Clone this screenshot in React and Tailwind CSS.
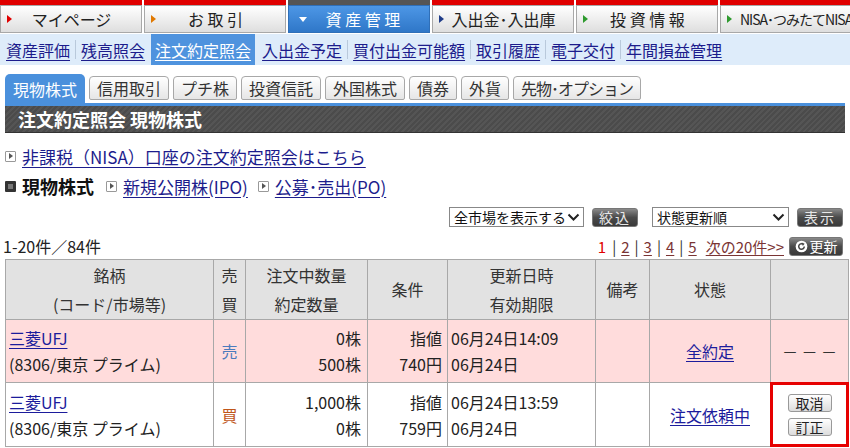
import React from 'react';

const topTabs = [
  { label: 'マイページ', arrow: 'border-l-[#e00000]' },
  { label: 'お 取 引', arrow: 'border-l-[#e07800]' },
  { label: '資 産 管 理', active: true },
  { label: '入出金･入出庫', arrow: 'border-l-[#1f3c88]' },
  { label: '投 資 情 報', arrow: 'border-l-[#2e9a2e]' },
  { label: 'NISA･つみたてNISA', arrow: 'border-l-[#2e9a2e]', small: true },
];

const subLinks = ['資産評価', '残高照会', '注文約定照会', '入出金予定', '買付出金可能額', '取引履歴', '電子交付', '年間損益管理'];

const tabs = ['現物株式', '信用取引', 'プチ株', '投資信託', '外国株式', '債券', '外貨', '先物･オプション'];

const LinkIcon = () => (
  <span className="inline-flex items-center justify-center w-[11px] h-[11px] border border-[#999] bg-white rounded-[1px] mr-[6px] shrink-0">
    <span className="w-0 h-0 border-y-[3px] border-y-transparent border-l-[4px] border-l-[#555] ml-[1px]" />
  </span>
);

const Select = ({ label, width }) => (
  <div className={`flex items-center justify-between h-[20px] border border-[#888] bg-white pl-[4px] pr-[3px] text-[14px] text-[#111] whitespace-nowrap ${width}`}>
    <span className="leading-none">{label}</span>
    <svg width="13" height="9" viewBox="0 0 13 9" className="shrink-0">
      <path d="M1.5 1.5 L6.5 6.5 L11.5 1.5" fill="none" stroke="#222" strokeWidth="2" />
    </svg>
  </div>
);

const DarkButton = ({ children, width }) => (
  <div className={`flex items-center justify-center h-[19px] rounded-[3px] border border-[#777] bg-linear-to-b from-[#8a8a8a] via-[#4a4a4a] to-[#3a3a3a] text-[#e8e8e8] text-[14px] leading-none tracking-[2px] ${width}`}>
    {children}
  </div>
);

const SmallButton = ({ children }) => (
  <div className="flex items-center justify-center w-[44px] h-[18px] rounded-[3px] border border-[#999] bg-linear-to-b from-white to-[#dcdcdc] text-[14px] leading-none text-[#222]">
    {children}
  </div>
);

const App = () => {
  return (
    <div className="w-[850px] h-[448px] overflow-hidden bg-white font-['Noto_Sans_CJK_JP',sans-serif] text-[#222]">
      {/* top navigation */}
      <div className="flex gap-[2px] overflow-hidden w-[850px]">
        {topTabs.map((t, i) => (
          <div key={i} className="flex flex-col w-[142px] shrink-0">
            <div className={`h-[5px] ${t.active ? 'bg-[#555]' : 'bg-[#e00000]'}`} />
            <div
              className={`h-[28px] flex items-center pl-[6px] border ${
                t.active
                  ? 'bg-linear-to-b from-[#4d97e6] to-[#2f77c8] border-[#2f6fb8] text-white'
                  : 'bg-linear-to-b from-white to-[#dedede] border-[#a8a8a8] text-[#222]'
              }`}
            >
              {t.active ? (
                <span className="w-0 h-0 border-x-[4px] border-x-transparent border-t-[5px] border-t-white ml-[4px]" />
              ) : (
                <span className={`w-0 h-0 border-y-[4px] border-y-transparent border-l-[5px] ${t.arrow}`} />
              )}
              <span
                className={`${t.small ? 'ml-[8px] text-[14px] tracking-[-1px] whitespace-nowrap' : 'flex-1 text-center text-[16px] pr-[10px] whitespace-nowrap'} leading-none`}
              >
                {t.label}
              </span>
            </div>
          </div>
        ))}
      </div>

      {/* sub navigation */}
      <div className="flex items-stretch h-[31px] mt-[1px] bg-[#deecfa] pl-[2px]">
        {subLinks.map((s, i) => (
          <React.Fragment key={s}>
            {i > 0 && i !== 2 && i !== 3 && <div className="w-px bg-[#b9c9db] my-[6px] mx-[1px]" />}
            {i === 3 && <div className="w-[3px]" />}
            <div
              className={`flex items-center px-[4px] text-[16px] underline underline-offset-[3px] leading-none ${
                i === 2 ? 'bg-[#4f93de] text-white ml-[2px]' : 'text-[#1c1c8c]'
              }`}
            >
              {s}
            </div>
          </React.Fragment>
        ))}
      </div>

      {/* product tabs */}
      <div className="px-[5px] mt-[9px]">
        <div className="flex items-end gap-[4px]">
          {tabs.map((t, i) =>
            i === 0 ? (
              <div key={t} className="h-[29px] flex items-center px-[8px] rounded-t-[5px] bg-[#4a90dc] text-white text-[16px] leading-none">
                {t}
              </div>
            ) : (
              <div
                key={t}
                className="h-[24px] mb-[3px] flex items-center px-[7px] rounded-t-[4px] rounded-b-[2px] border border-[#a8a8a8] bg-linear-to-b from-white to-[#e6e6e6] text-[16px] text-[#333] leading-none"
              >
                {i === 7 ? <span className="tracking-[-1px]">{t}</span> : t}
              </div>
            )
          )}
        </div>
        <div className="h-[3px] bg-[#4a90dc]" />
        <div className="h-[27px] flex items-center pl-[13px] bg-[repeating-linear-gradient(135deg,#4b4b4b_0px,#4b4b4b_2px,#555555_2px,#555555_4px)] border-b border-[#333]">
          <span className="text-white text-[18px] font-bold leading-none">注文約定照会 現物株式</span>
        </div>
      </div>

      {/* links */}
      <div className="mt-[12px] pl-[5px] h-[22px] flex items-center">
        <LinkIcon />
        <span className="text-[17px] text-[#1c1c8c] underline underline-offset-[3px] leading-none">非課税（NISA）口座の注文約定照会はこちら</span>
      </div>
      <div className="mt-[8px] pl-[5px] h-[22px] flex items-center">
        <span className="inline-flex items-center justify-center w-[11px] h-[11px] bg-[#333] rounded-[1px] mr-[6px]">
          <span className="w-[5px] h-[5px] bg-[#777]" />
        </span>
        <span className="text-[18px] font-bold leading-none text-[#111] mr-[12px]">現物株式</span>
        <LinkIcon />
        <span className="text-[17px] text-[#1c1c8c] underline underline-offset-[3px] leading-none mr-[10px]">新規公開株(IPO)</span>
        <LinkIcon />
        <span className="text-[17px] text-[#1c1c8c] underline underline-offset-[3px] leading-none">公募･売出(PO)</span>
      </div>

      {/* controls */}
      <div className="mt-[10px] flex items-center justify-end pr-[7px] gap-[8px]">
        <Select label="全市場を表示する" width="w-[135px]" />
        <DarkButton width="w-[46px] mr-[6px]">絞込</DarkButton>
        <Select label="状態更新順" width="w-[137px]" />
        <DarkButton width="w-[46px]">表示</DarkButton>
      </div>

      {/* count + pagination */}
      <div className="mt-[9px] flex items-center justify-between pl-[3px] pr-[7px] h-[20px]">
        <span className="text-[16px] leading-none">1-20件／84件</span>
        <div className="flex items-center text-[15px] leading-none">
          <span className="text-[#e00000] mr-[6px]">1</span>
          {['2', '3', '4', '5'].map((n) => (
            <React.Fragment key={n}>
              <span className="text-[#333] mr-[5px]">|</span>
              <span className="text-[#7a3434] underline underline-offset-[2px] mr-[5px]">{n}</span>
            </React.Fragment>
          ))}
          <span className="text-[#7a3434] underline underline-offset-[2px] ml-[4px] mr-[5px]">次の20件&gt;&gt;</span>
          <div className="flex items-center justify-center w-[54px] h-[19px] rounded-[3px] border border-[#777] bg-linear-to-b from-[#8a8a8a] via-[#4a4a4a] to-[#3a3a3a] text-white text-[14px] gap-[2px]">
            <svg width="13" height="13" viewBox="0 0 14 14">
              <circle cx="7" cy="7" r="6.3" fill="#fff" />
              <path d="M10 7 A3 3 0 1 1 8.5 4.4" fill="none" stroke="#444" strokeWidth="1.6" />
              <path d="M7.2 2.8 L10.4 4 L8.4 6.4 Z" fill="#444" />
            </svg>
            <span>更新</span>
          </div>
        </div>
      </div>

      {/* table */}
      <table className="mt-[3px] ml-[5px] w-[843px] table-fixed border-collapse text-[16px] leading-[26px]">
        <colgroup>
          <col className="w-[208px]" />
          <col className="w-[32px]" />
          <col className="w-[122px]" />
          <col className="w-[80px]" />
          <col className="w-[148px]" />
          <col className="w-[54px]" />
          <col className="w-[121px]" />
          <col className="w-[78px]" />
        </colgroup>
        <thead>
          <tr className="h-[60px] bg-[#e2e2e2] text-[#333] leading-[29px]">
            <th className="font-normal border border-[#a8a8a8] text-center">銘柄<br />(コード/市場等)</th>
            <th className="font-normal border border-[#a8a8a8] text-center">売<br />買</th>
            <th className="font-normal border border-[#a8a8a8] text-center">注文中数量<br />約定数量</th>
            <th className="font-normal border border-[#a8a8a8] text-center">条件</th>
            <th className="font-normal border border-[#a8a8a8] text-center">更新日時<br />有効期限</th>
            <th className="font-normal border border-[#a8a8a8] text-center">備考</th>
            <th className="font-normal border border-[#a8a8a8] text-center">状態</th>
            <th className="font-normal border border-[#a8a8a8]"></th>
          </tr>
        </thead>
        <tbody>
          <tr className="h-[63px] bg-[#ffdcdc]">
            <td className="border border-[#a8a8a8] px-[3px]">
              <div className="text-[#1c1c9c] underline underline-offset-[3px]">三菱UFJ</div>
              <div>(8306/東京 プライム)</div>
            </td>
            <td className="border border-[#a8a8a8] text-center text-[#4a7bbd]">売</td>
            <td className="border border-[#a8a8a8] text-right pr-[6px]">
              <div>0株</div>
              <div>500株</div>
            </td>
            <td className="border border-[#a8a8a8] text-right pr-[5px]">
              <div>指値</div>
              <div>740円</div>
            </td>
            <td className="border border-[#a8a8a8] pl-[3px]">
              <div>06月24日14:09</div>
              <div>06月24日</div>
            </td>
            <td className="border border-[#a8a8a8]"></td>
            <td className="border border-[#a8a8a8] text-center">
              <span className="text-[#1c1c9c] underline underline-offset-[3px]">全約定</span>
            </td>
            <td className="border border-[#a8a8a8] text-center text-[#333]">－ － －</td>
          </tr>
          <tr className="h-[64px] bg-white">
            <td className="border border-[#a8a8a8] px-[3px]">
              <div className="text-[#1c1c9c] underline underline-offset-[3px]">三菱UFJ</div>
              <div>(8306/東京 プライム)</div>
            </td>
            <td className="border border-[#a8a8a8] text-center text-[#c0561a]">買</td>
            <td className="border border-[#a8a8a8] text-right pr-[6px]">
              <div>1,000株</div>
              <div>0株</div>
            </td>
            <td className="border border-[#a8a8a8] text-right pr-[5px]">
              <div>指値</div>
              <div>759円</div>
            </td>
            <td className="border border-[#a8a8a8] pl-[3px]">
              <div>06月24日13:59</div>
              <div>06月24日</div>
            </td>
            <td className="border border-[#a8a8a8]"></td>
            <td className="border border-[#a8a8a8] text-center">
              <span className="text-[#1c1c9c] underline underline-offset-[3px]">注文依頼中</span>
            </td>
            <td className="border border-[#a8a8a8] relative">
              <div className="flex flex-col items-center gap-[6px]">
                <SmallButton>取消</SmallButton>
                <SmallButton>訂正</SmallButton>
              </div>
              <div className="absolute -inset-[1px] border-[3px] border-[#e60000]" />
            </td>
          </tr>
        </tbody>
      </table>
    </div>
  );
};

export default App;
